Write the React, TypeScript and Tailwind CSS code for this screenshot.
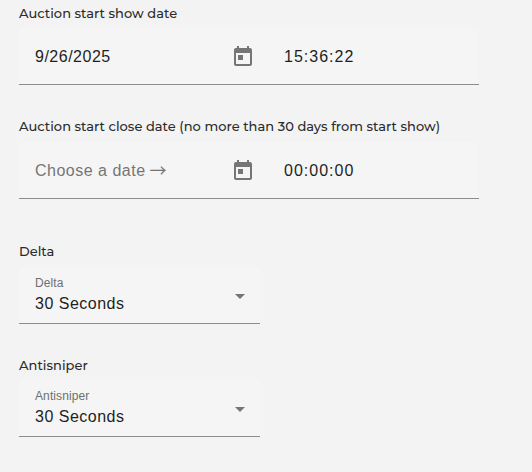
function CalendarIcon() {
  return (
    <svg viewBox="0 0 24 24" className="w-6 h-6 shrink-0 mt-0.5 fill-[#757575]">
      <path d="M19 3h-1V1h-2v2H8V1H6v2H5c-1.11 0-1.99.9-1.99 2L3 19c0 1.1.89 2 2 2h14c1.1 0 2-.9 2-2V5c0-1.1-.9-2-2-2zm0 16H5V8h14v11zM7 10h5v5H7z" />
    </svg>
  );
}

const heading = "text-[13px] leading-4 text-[#2b2b2b] font-['Montserrat','Inter',sans-serif] font-medium tracking-[0.03px]";

function DateField({ value, time, placeholder, arrow, gap }: { value: string; time: string; placeholder?: boolean; arrow?: boolean; gap: string }) {
  return (
    <div className={`${gap} flex h-[57px] w-[460px] items-center rounded-t border-b border-[#8c8c8c] bg-[#f5f5f5] pl-4`}>
      <span className={`w-[196px] pt-0.5 text-base leading-6 tracking-[0.5px] ${placeholder ? "text-[#757575]" : "text-[#1f1f1f]"}`}>
        {value}
        {arrow && <span className="ml-1 inline-block translate-y-px font-['Noto_Sans_CJK_SC',sans-serif] text-[17px] leading-none tracking-normal">→</span>}
      </span>
      <CalendarIcon />
      <span className="ml-[29px] pt-0.5 text-base leading-6 tracking-[1px] text-[#1f1f1f]">{time}</span>
    </div>
  );
}

function SelectField({ label, gap }: { label: string; gap: string }) {
  return (
    <div className={`${gap} flex h-[57px] w-[241px] items-center justify-between rounded-t border-b border-[#8c8c8c] bg-[#f5f5f5] pl-4 pr-[15px]`}>
      <div className="flex flex-col">
        <span className="text-xs leading-4 tracking-[0.1px] text-[#6f6f6f] -translate-y-[2px]">{label}</span>
        <span className="translate-y-px text-base leading-5 tracking-[0.5px] text-[#1f1f1f]">30 Seconds</span>
      </div>
      <div className="h-0 w-0 translate-y-px border-x-[5px] border-t-[5px] border-x-transparent border-t-[#757575]" />
    </div>
  );
}

export default function App() {
  return (
    <div className="h-[472px] w-[532px] overflow-hidden bg-[#f3f3f3] pl-[19px] pt-[5px] font-['Liberation_Sans',sans-serif]">
      <div className={heading}>Auction start show date</div>
      <DateField value="9/26/2025" time="15:36:22" gap="mt-[7px]" />
      <div className={`${heading} mt-[33px]`}>Auction start close date (no more than 30 days from start show)</div>
      <DateField value="Choose a date" time="00:00:00" placeholder arrow gap="mt-[8px]" />
      <div className={`${heading} mt-[44px]`}>Delta</div>
      <SelectField label="Delta" gap="mt-[8px]" />
      <div className={`${heading} mt-[33px]`}>Antisniper</div>
      <SelectField label="Antisniper" gap="mt-[7px]" />
    </div>
  );
}
